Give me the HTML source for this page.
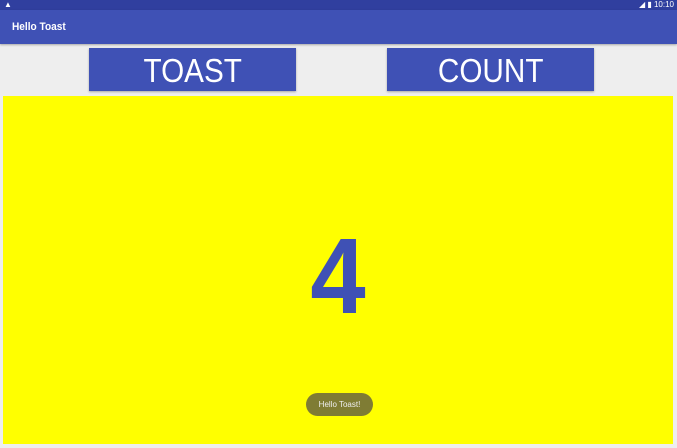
<!DOCTYPE html><html><head><style>
body{margin:0;width:677px;height:448px;background:#eeeeee;font-family:"Liberation Sans",sans-serif;position:relative;overflow:hidden}
.sb{position:absolute;left:0;top:0;width:677px;height:10px;background:#303f9f}
.tb{position:absolute;left:0;top:10px;width:677px;height:34px;background:#3f51b5;box-shadow:0 1px 2px rgba(0,0,0,.3)}
.tb span{position:absolute;left:12px;top:11px;color:#fff;font-size:11px;font-weight:bold;transform:scaleX(.92);transform-origin:left}
.btn{position:absolute;top:48px;width:207px;height:43px;background:#3f51b5;color:#fff;font-size:33px;text-align:center;line-height:46px;box-shadow:0 1px 2px rgba(0,0,0,.3)}
.btn span{display:inline-block;transform:scaleX(.9)}
.y{position:absolute;left:3px;top:96px;width:670px;height:348px;background:#ffff00}
.n{position:absolute;left:0;width:677px;top:220px;text-align:center;font-size:108px;font-weight:bold;color:#3f51b5;line-height:112px}
.n span{display:inline-block;transform:scaleX(.92)}
.t{position:absolute;left:306px;top:393px;width:67px;height:23px;border-radius:12px;background:#7f7c34;color:#eee;font-size:8px;text-align:center;line-height:23px}
</style></head><body>
<div class="sb"><span style="position:absolute;left:4px;top:0;color:#fff;font-size:8px;line-height:10px">▲</span><span style="position:absolute;right:3px;top:0;color:#fff;font-size:8px;line-height:10px">◢ ▮ 10:10</span></div>
<div class="tb"><span>Hello Toast</span></div>
<div class="btn" style="left:89px"><span>TOAST</span></div>
<div class="btn" style="left:387px"><span>COUNT</span></div>
<div class="y"></div>
<div class="n"><span>4</span></div>
<div class="t">Hello Toast!</div>
</body></html>
